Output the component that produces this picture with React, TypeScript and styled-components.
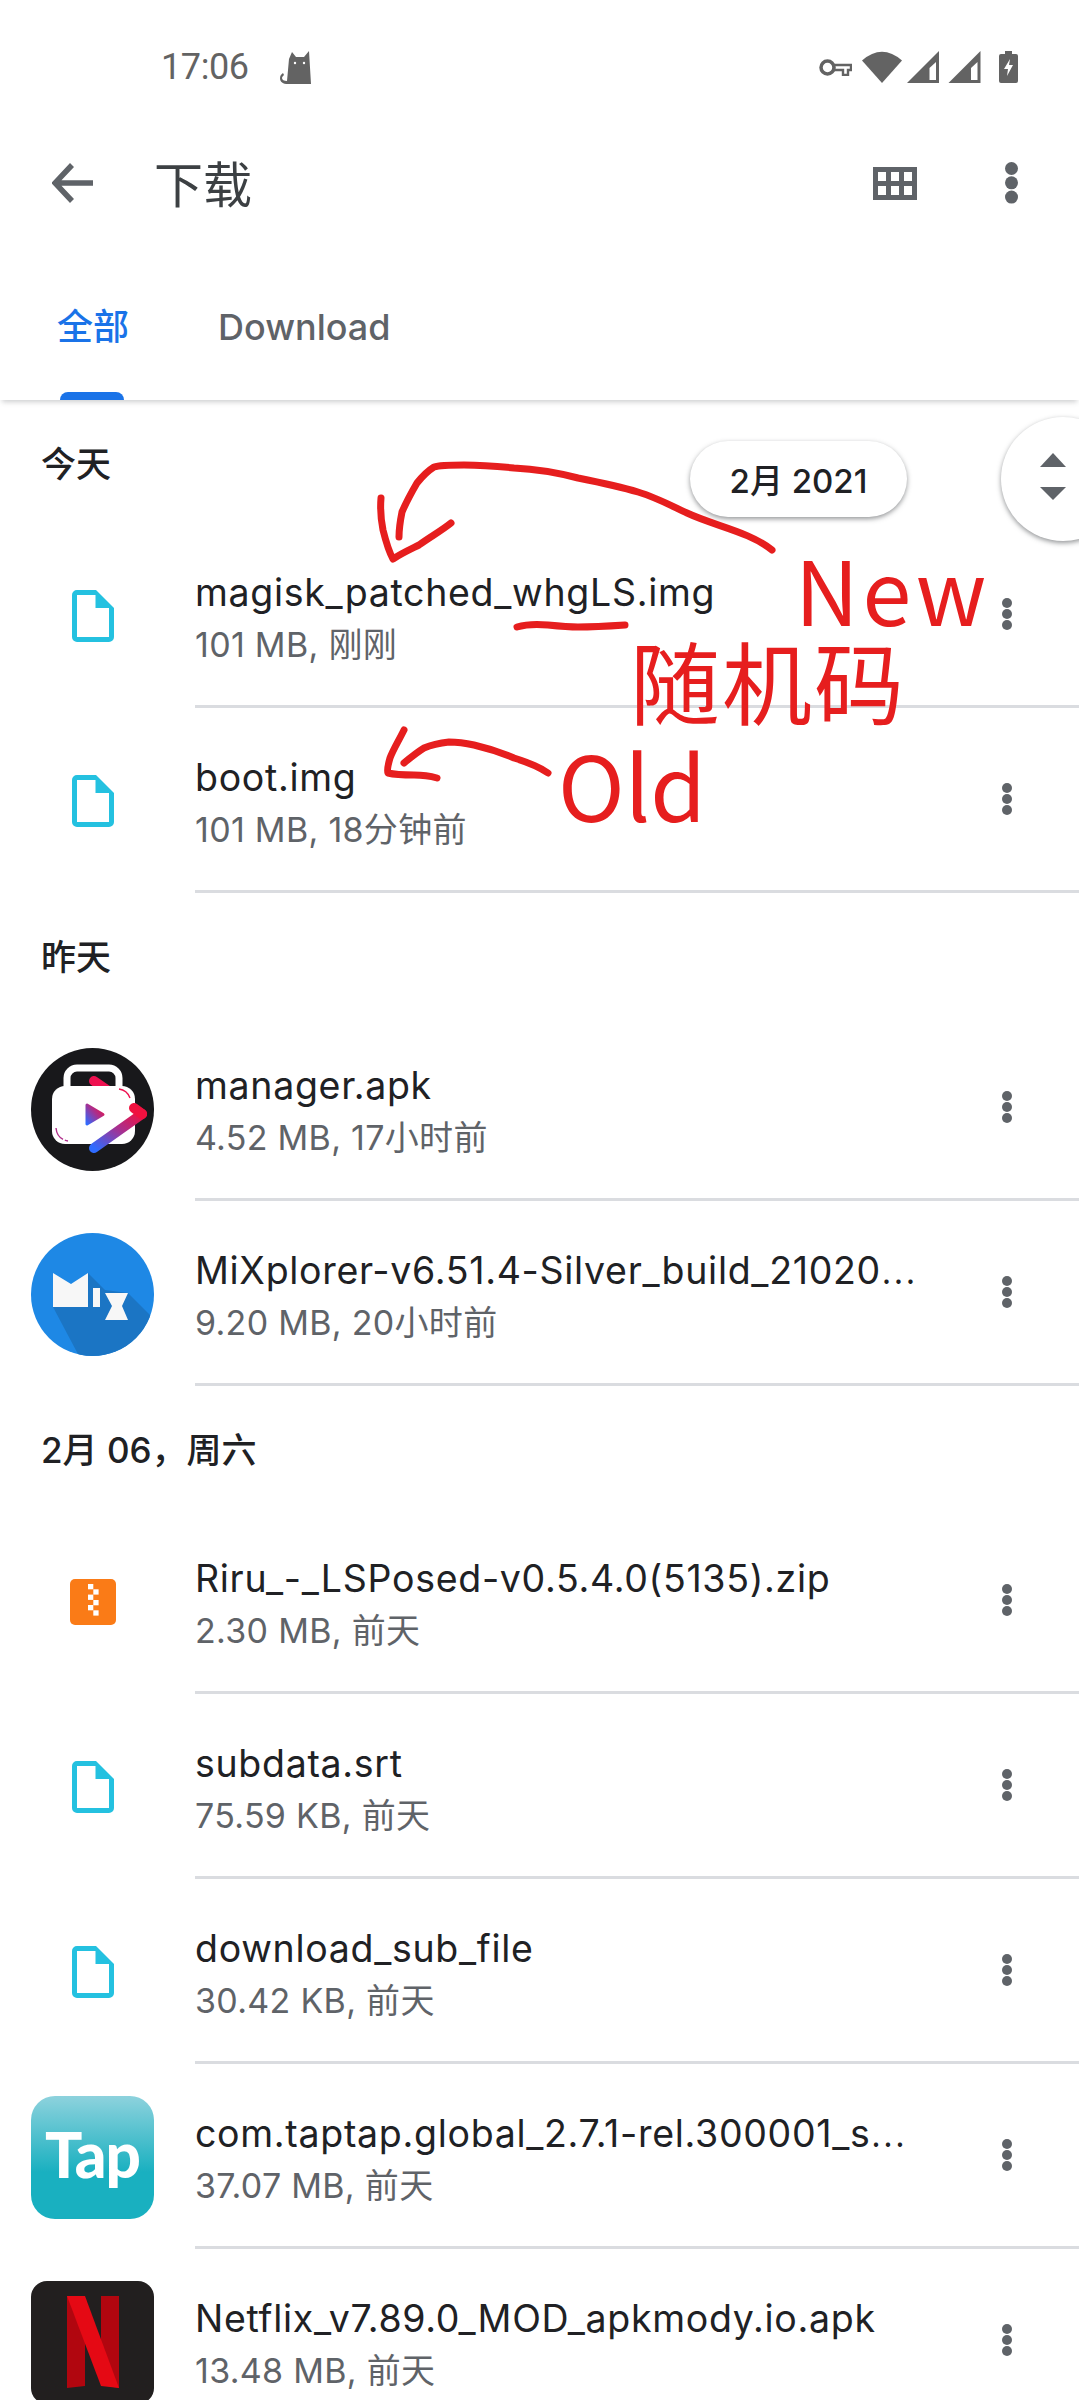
import React from 'react';
import styled, { createGlobalStyle } from 'styled-components';

const SANS = `Inter, "Noto Sans CJK SC", sans-serif`;

const Global = createGlobalStyle`
  html, body { margin: 0; padding: 0; background: #fff; }
  body { font-family: ${SANS}; }
  * { box-sizing: border-box; }
`;

const Page = styled.div`
  position: relative;
  width: 1079px;
  height: 2400px;
  overflow: hidden;
  background: #fff;
`;

const StatusBar = styled.div`
  height: 134px;
  display: flex;
  align-items: center;
  padding: 0 61px 0 161px;
  color: #636363;
`;
const Clock = styled.span`
  font-family: Roboto, sans-serif;
  font-size: 36px;
  letter-spacing: -0.4px;
  margin-right: 31px;
`;
const StatusRight = styled.div`
  margin-left: auto;
  display: flex;
  align-items: center;
  gap: 7px;
`;
const SignalIcon = styled.svg<{ $after: number; $before?: number }>`
  margin-left: ${(p) => p.$before ?? 0}px;
  margin-right: ${(p) => p.$after}px;
`;

const Toolbar = styled.div`
  height: 98px;
  display: flex;
  align-items: center;
  padding: 0 61px 0 52px;
`;
const Title = styled.h1`
  margin: 0 0 4px 61px;
  font-size: 49px;
  font-weight: 400;
  color: #3c4043;
  flex: 1;
`;
const GridButton = styled.svg`
  margin-right: 88px;
`;

const Tabs = styled.div`
  height: 168px;
  display: flex;
  padding-left: 57px;
  gap: 89px;
  position: relative;
  z-index: 1;
  background: #fff;
  box-shadow: 0 4px 5px -2px rgba(60, 64, 67, 0.25);
`;
const Tab = styled.div<{ $active?: boolean }>`
  position: relative;
  height: 100%;
  padding-top: 73px;
  font-size: 36px;
  line-height: 44px;
  font-weight: 500;
  color: ${(p) => (p.$active ? '#1a73e8' : '#5f6368')};
`;
const Indicator = styled.div`
  position: absolute;
  left: 3px;
  right: 5px;
  bottom: 0;
  height: 8px;
  background: #1a73e8;
  border-radius: 8px 8px 0 0;
`;

const SectionTitle = styled.div<{ $height: number }>`
  height: ${(p) => p.$height}px;
  padding: 42px 0 0 41px;
  font-size: 35px;
  line-height: 44px;
  font-weight: 500;
  color: #202124;
`;

const Row = styled.div`
  display: flex;
  height: 185px;
`;
const IconSlot = styled.div`
  width: 195px;
  flex: none;
  display: flex;
  align-items: center;
  justify-content: center;
  padding: 1px 10px 0 0;
`;
const RowBody = styled.div`
  flex: 1;
  min-width: 0;
  display: flex;
  align-items: center;
  padding-right: 67px;
  border-bottom: 3px solid #dadce0;
`;
const RowText = styled.div`
  flex: 1;
  min-width: 0;
  padding-top: 10px;
`;
const FileName = styled.div`
  font-size: 37.5px;
  letter-spacing: 0.7px;
  line-height: 52px;
  color: #202124;
  white-space: nowrap;
`;
const Ellipsis = styled.span`
  font-family: "Noto Sans CJK SC", sans-serif;
  letter-spacing: 0;
  font-size: 32px;
  line-height: 1;
`;
const FileMeta = styled.div`
  font-size: 34px;
  letter-spacing: 0.3px;
  line-height: 52px;
  color: #5f6368;
  white-space: nowrap;
`;

const DatePill = styled.div`
  position: absolute;
  left: 690px;
  top: 441px;
  width: 217px;
  height: 76px;
  border-radius: 38px;
  background: #fff;
  box-shadow: 0 2px 5px rgba(60, 64, 67, 0.55);
  display: flex;
  align-items: center;
  justify-content: center;
  font-size: 33px;
  font-weight: 500;
  color: #202124;
  z-index: 2;
`;
const ScrollThumb = styled.div`
  position: absolute;
  left: 1001px;
  top: 417px;
  width: 124px;
  height: 124px;
  border-radius: 50%;
  background: #fff;
  box-shadow: 0 2px 5px rgba(60, 64, 67, 0.55);
  padding: 36px 0 0 39px;
  z-index: 2;
`;

const Ink = styled.svg`
  position: absolute;
  inset: 0;
  z-index: 3;
  pointer-events: none;
`;
const Scribble = styled.span<{ $left: number; $top: number; $size: number; $gap: number }>`
  position: absolute;
  left: ${(p) => p.$left}px;
  top: ${(p) => p.$top}px;
  font-size: ${(p) => p.$size}px;
  letter-spacing: ${(p) => p.$gap}px;
  line-height: 1;
  color: #e61e1e;
  font-family: "Noto Sans CJK SC", sans-serif;
  white-space: nowrap;
  z-index: 3;
`;

const TapTile = styled.div`
  width: 123px;
  height: 123px;
  border-radius: 24px;
  background: linear-gradient(180deg, #8dd2dd 0%, #19b0c0 62%);
  display: flex;
  align-items: center;
  justify-content: center;
  padding-bottom: 6px;
  color: #fff;
  font-family: Lato, sans-serif;
  font-weight: 900;
  font-size: 62px;
  letter-spacing: -1px;
`;
const NetflixTile = styled.div`
  width: 123px;
  height: 123px;
  border-radius: 16px;
  background: #221f1f;
  display: flex;
  align-items: center;
  justify-content: center;
`;

const DocIcon = () => (
  <svg width="42" height="52" viewBox="0 0 42 52">
    <path
      fill="#24c1e0"
      fillRule="evenodd"
      d="M5 0H24L42 18V47a5 5 0 0 1-5 5H5a5 5 0 0 1-5-5V5a5 5 0 0 1 5-5ZM5 5V47H37V18H23.5V5Z"
    />
  </svg>
);

const ZipIcon = () => (
  <svg width="46" height="46" viewBox="0 0 46 46">
    <rect width="46" height="46" rx="5" fill="#fa7b17" />
    {[5, 15.6, 26].map((y) => (
      <rect key={y} x="18" y={y} width="5.3" height="5.3" fill="#fff" />
    ))}
    {[10.3, 21, 31.3].map((y) => (
      <rect key={y} x="23.3" y={y} width="5.3" height="5.3" fill="#fff" />
    ))}
  </svg>
);

const ManagerIcon = () => (
  <svg width="123" height="123" viewBox="0 0 123 123">
    <defs>
      <linearGradient id="mgr" x1="0" y1="1" x2="1" y2="0">
        <stop offset="0" stopColor="#2f6bff" />
        <stop offset="0.55" stopColor="#a92f8e" />
        <stop offset="1" stopColor="#f0113f" />
      </linearGradient>
    </defs>
    <circle cx="61.5" cy="61.5" r="61.5" fill="#18181b" />
    <path d="M63 33L111 66" stroke="#ee1150" strokeWidth="10" strokeLinecap="round" fill="none" />
    <path
      d="M36 40V30a10 10 0 0 1 10-10H78a10 10 0 0 1 10 10V40"
      stroke="#fff"
      strokeWidth="7"
      fill="none"
    />
    <rect x="21" y="38" width="83" height="58" rx="13" fill="#fff" />
    <path d="M111 66L63 100" stroke="url(#mgr)" strokeWidth="10" strokeLinecap="round" fill="none" />
    <path d="M111 66L103 60" stroke="#f0113f" strokeWidth="10" strokeLinecap="round" fill="none" />
    <path d="M56 57L72 66.5L56 76Z" fill="url(#mgr)" stroke="url(#mgr)" strokeWidth="3" strokeLinejoin="round" />
    <path d="M88 41q8 1 11 9" stroke="#ee1150" strokeWidth="1.4" fill="none" />
    <path d="M25 80q1 11 12 13" stroke="#b0308c" strokeWidth="1.4" fill="none" strokeDasharray="14 2 12" />
  </svg>
);

const MixIcon = () => (
  <svg width="123" height="123" viewBox="0 0 123 123">
    <defs>
      <clipPath id="mix">
        <circle cx="61.5" cy="61.5" r="61.5" />
      </clipPath>
    </defs>
    <circle cx="61.5" cy="61.5" r="61.5" fill="#1e88e5" />
    <path
      clipPath="url(#mix)"
      d="M57 40L74 57L97 60L123 86V123H48L22 74Z"
      fill="#1b75c4"
    />
    <path d="M22 40L40 51L57 40V74H22Z" fill="#f7f7f7" />
    <rect x="62" y="55" width="7" height="19" fill="#f7f7f7" />
    <path d="M74 60H97L91 73L97 87H74L81 73Z" fill="#f7f7f7" />
  </svg>
);

const NetflixIcon = () => (
  <svg width="52" height="92" viewBox="0 0 52 92">
    <path d="M0 0H18V90L0 92Z" fill="#b1060f" />
    <path d="M34 0H52V92L34 89Z" fill="#b1060f" />
    <path d="M0 0H18L52 92L34 90Z" fill="#e50914" />
  </svg>
);

const Dots = ({ size, fill }: { size: number; fill: string }) => (
  <svg width={size} height={size * 3.2} viewBox="0 0 10 32" style={{ flex: 'none' }}>
    <circle cx="5" cy="5" r="5" fill={fill} />
    <circle cx="5" cy="16" r="5" fill={fill} />
    <circle cx="5" cy="27" r="5" fill={fill} />
  </svg>
);

type FileRow = { name: string; cut?: boolean; meta: string; icon: React.ReactNode };
type Section = { title: string; height: number; rows: FileRow[] };

const sections: Section[] = [
  {
    title: '今天',
    height: 123,
    rows: [
      { name: 'magisk_patched_whgLS.img', meta: '101 MB, 刚刚', icon: <DocIcon /> },
      { name: 'boot.img', meta: '101 MB, 18分钟前', icon: <DocIcon /> },
    ],
  },
  {
    title: '昨天',
    height: 123,
    rows: [
      { name: 'manager.apk', meta: '4.52 MB, 17小时前', icon: <ManagerIcon /> },
      { name: 'MiXplorer-v6.51.4-Silver_build_21020', cut: true, meta: '9.20 MB, 20小时前', icon: <MixIcon /> },
    ],
  },
  {
    title: '2月 06，周六',
    height: 123,
    rows: [
      { name: 'Riru_-_LSPosed-v0.5.4.0(5135).zip', meta: '2.30 MB, 前天', icon: <ZipIcon /> },
      { name: 'subdata.srt', meta: '75.59 KB, 前天', icon: <DocIcon /> },
      { name: 'download_sub_file', meta: '30.42 KB, 前天', icon: <DocIcon /> },
      {
        name: 'com.taptap.global_2.7.1-rel.300001_s',
        cut: true,
        meta: '37.07 MB, 前天',
        icon: <TapTile>Tap</TapTile>,
      },
      {
        name: 'Netflix_v7.89.0_MOD_apkmody.io.apk',
        meta: '13.48 MB, 前天',
        icon: (
          <NetflixTile>
            <NetflixIcon />
          </NetflixTile>
        ),
      },
    ],
  },
];

const STATUS = '#636363';

export default function App() {
  return (
    <Page>
      <Global />
      <StatusBar>
        <Clock>17:06</Clock>
        <svg width="34" height="33" viewBox="0 0 34 33">
          <path
            fill={STATUS}
            d="M12 1L16 6H24L29 0L31 33H8C3 33 0 31 0 27C0 24 2 23 3 22L4 24C3 25 2 26 2 27C2 29 4 30 7 30L9 8Z"
          />
          <circle cx="15" cy="12" r="1.2" fill="#fff" />
          <circle cx="24" cy="12" r="1.2" fill="#fff" />
        </svg>
        <StatusRight>
          <svg width="33" height="17" viewBox="0 0 33 17" style={{ marginRight: 3 }}>
            <circle cx="8.5" cy="8.5" r="6.5" fill="none" stroke={STATUS} strokeWidth="3.5" />
            <path d="M15 6H32V11H29V16H24V11H15Z" fill="none" stroke={STATUS} strokeWidth="2.4" />
          </svg>
          <svg width="40" height="32" viewBox="0 0 40 32">
            <path d="M0 9.5Q20 -8 40 9.5L20 32Z" fill={STATUS} />
          </svg>
          <SignalIcon width="32" height="32" viewBox="0 0 32 32" $before={-2} $after={2}>
            <path d="M32 0V32H0Z" fill={STATUS} />
            <path d="M22.5 29V17L29 11V29Z" fill="#fff" />
          </SignalIcon>
          <SignalIcon width="33" height="32" viewBox="0 0 32 32" $after={11}>
            <path d="M32 0V32H0Z" fill={STATUS} />
            <path d="M22.5 29V17L29 11V29Z" fill="#fff" />
          </SignalIcon>
          <svg width="19" height="32" viewBox="0 0 19 32">
            <path d="M6 0H13V3H17a2 2 0 0 1 2 2V30a2 2 0 0 1-2 2H2a2 2 0 0 1-2-2V5a2 2 0 0 1 2-2H6Z" fill={STATUS} />
            <path d="M11 8L5 18H9L8 25L14 14H10Z" fill="#fff" />
          </svg>
        </StatusRight>
      </StatusBar>

      <Toolbar>
        <svg width="41" height="40" viewBox="0 0 41 40" style={{ flex: 'none' }}>
          <path d="M20 2L3 20L20 38M3 20H41" fill="none" stroke="#5f6368" strokeWidth="5.5" />
        </svg>
        <Title>下载</Title>
        <GridButton width="44" height="33" viewBox="0 0 44 33">
          <path
            fill="#5f6368"
            fillRule="evenodd"
            d="M0 0H44V33H0ZM5 5V14H13V5ZM18 5V14H26V5ZM31 5V14H39V5ZM5 19V28H13V19ZM18 19V28H26V19ZM31 19V28H39V19Z"
          />
        </GridButton>
        <Dots size={13} fill="#5f6368" />
      </Toolbar>

      <Tabs>
        <Tab $active>
          全部
          <Indicator />
        </Tab>
        <Tab>Download</Tab>
      </Tabs>

      {sections.map((section) => (
        <section key={section.title}>
          <SectionTitle $height={section.height}>{section.title}</SectionTitle>
          {section.rows.map((row) => (
            <Row key={row.name}>
              <IconSlot>{row.icon}</IconSlot>
              <RowBody>
                <RowText>
                  <FileName>
                    {row.name}
                    {row.cut && <Ellipsis>⋯</Ellipsis>}
                  </FileName>
                  <FileMeta>{row.meta}</FileMeta>
                </RowText>
                <Dots size={10} fill="#5f6368" />
              </RowBody>
            </Row>
          ))}
        </section>
      ))}

      <DatePill>2月 2021</DatePill>
      <ScrollThumb>
        <svg width="26" height="47" viewBox="0 0 26 47">
          <path d="M13 0L26 14H0Z" fill="#5f6368" />
          <path d="M0 34H26L13 47Z" fill="#5f6368" />
        </svg>
      </ScrollThumb>

      <Ink width="1079" height="2400" viewBox="0 0 1079 2400" fill="none" stroke="#e61e1e" strokeWidth="7" strokeLinecap="round" strokeLinejoin="round">
        <path d="M772 550C750 532 715 526 687 513C670 505 655 497 638 492C618 486 598 482 578 478C555 472 535 469 514 468C495 466 478 465 464 465C450 465 440 465 434 467C426 472 421 478 417 483C410 495 405 505 402 512C400 522 399 530 399 537" />
        <path d="M381 498C380 510 381 520 383 530C386 542 389 552 393 559C402 553 411 549 419 545C430 537 441 531 451 523" />
        <path d="M517 627C527 624 538 624 548 625C558 626 568 627 578 627C594 627 610 626 625 625" />
        <path d="M548 773C538 766 527 762 514 758C500 752 487 748 474 745C465 743 457 742 449 742C440 743 431 745 424 748C416 753 410 758 404 763" />
        <path d="M404 730C398 742 393 750 390 758C388 765 387 771 388 773C396 775 405 775 414 775C422 775 430 776 437 778" />
      </Ink>
      <Scribble $left={795} $top={544} $size={88} $gap={4}>New</Scribble>
      <Scribble $left={630} $top={634} $size={90} $gap={2}>随机码</Scribble>
      <Scribble $left={558} $top={738} $size={90} $gap={0}>Old</Scribble>
    </Page>
  );
}
